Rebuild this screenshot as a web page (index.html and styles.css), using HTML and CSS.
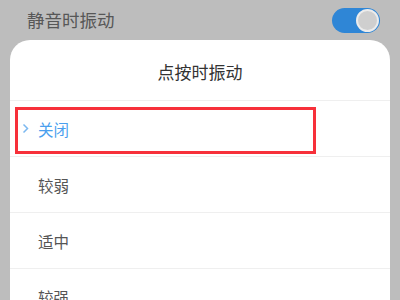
FILE: index.html
```html
<!DOCTYPE html>
<html lang="zh">
<head>
<meta charset="utf-8">
<link rel="stylesheet" href="styles.css">
</head>
<body>
<div class="screen">
  <div class="bg-row">
    <span class="bg-label">静音时振动</span>
    <span class="toggle"><span class="knob"></span></span>
  </div>
  <div class="dialog">
    <div class="title">点按时振动</div>
    <div class="row selected">
      <span class="mark"><svg width="7" height="11" viewBox="0 0 7 11"><polyline points="1.5,1.5 5.5,5.5 1.5,9.5" fill="none" stroke="#7bb8f0" stroke-width="1.5"/></svg></span>
      <span class="opt">关闭</span>
      <span class="highlight"></span>
    </div>
    <div class="row"><span class="mark"></span><span class="opt">较弱</span></div>
    <div class="row"><span class="mark"></span><span class="opt">适中</span></div>
    <div class="row"><span class="mark"></span><span class="opt">较强</span></div>
  </div>
</div>
</body>
</html>
```
FILE: styles.css
```css
html, body {
  margin: 0;
  padding: 0;
}
body {
  width: 400px;
  height: 300px;
  overflow: hidden;
  background: #bdbdbd;
  font-family: "Noto Sans CJK SC", "Noto Sans", sans-serif;
}
.screen {
  width: 400px;
  height: 300px;
  overflow: hidden;
}
.bg-row {
  height: 40px;
  display: flex;
  align-items: center;
  justify-content: space-between;
  padding: 0 20px 0 27px;
  box-sizing: border-box;
}
.bg-label {
  font-size: 17.5px;
  color: #575757;
  line-height: 1;
}
.toggle {
  width: 48px;
  height: 25px;
  border-radius: 13px;
  background: #2f86d6;
  display: flex;
  align-items: center;
  justify-content: flex-end;
  padding-right: 1px;
  box-sizing: border-box;
}
.knob {
  width: 23px;
  height: 23px;
  border-radius: 50%;
  background: #cfcfcf;
  border: 2px solid #ececec;
  box-sizing: border-box;
}
.dialog {
  margin: 0 10px;
  background: #ffffff;
  border-radius: 20px 20px 0 0;
  height: 300px;
}
.title {
  height: 60px;
  display: flex;
  align-items: center;
  justify-content: center;
  font-size: 17px;
  color: #333333;
  padding-top: 3px;
  box-sizing: border-box;
}
.row {
  position: relative;
  height: 56px;
  border-top: 1px solid #efefef;
  box-sizing: border-box;
  display: flex;
  align-items: center;
  padding-left: 12px;
}
.mark {
  width: 16px;
  display: flex;
  align-items: center;
}
.opt {
  font-size: 15.5px;
  color: #555555;
}
.selected .opt {
  color: #4a9fee;
}
.highlight {
  position: absolute;
  left: 5px;
  top: 6px;
  width: 301px;
  height: 47px;
  border: 3px solid #f7303a;
  box-sizing: border-box;
}
```
